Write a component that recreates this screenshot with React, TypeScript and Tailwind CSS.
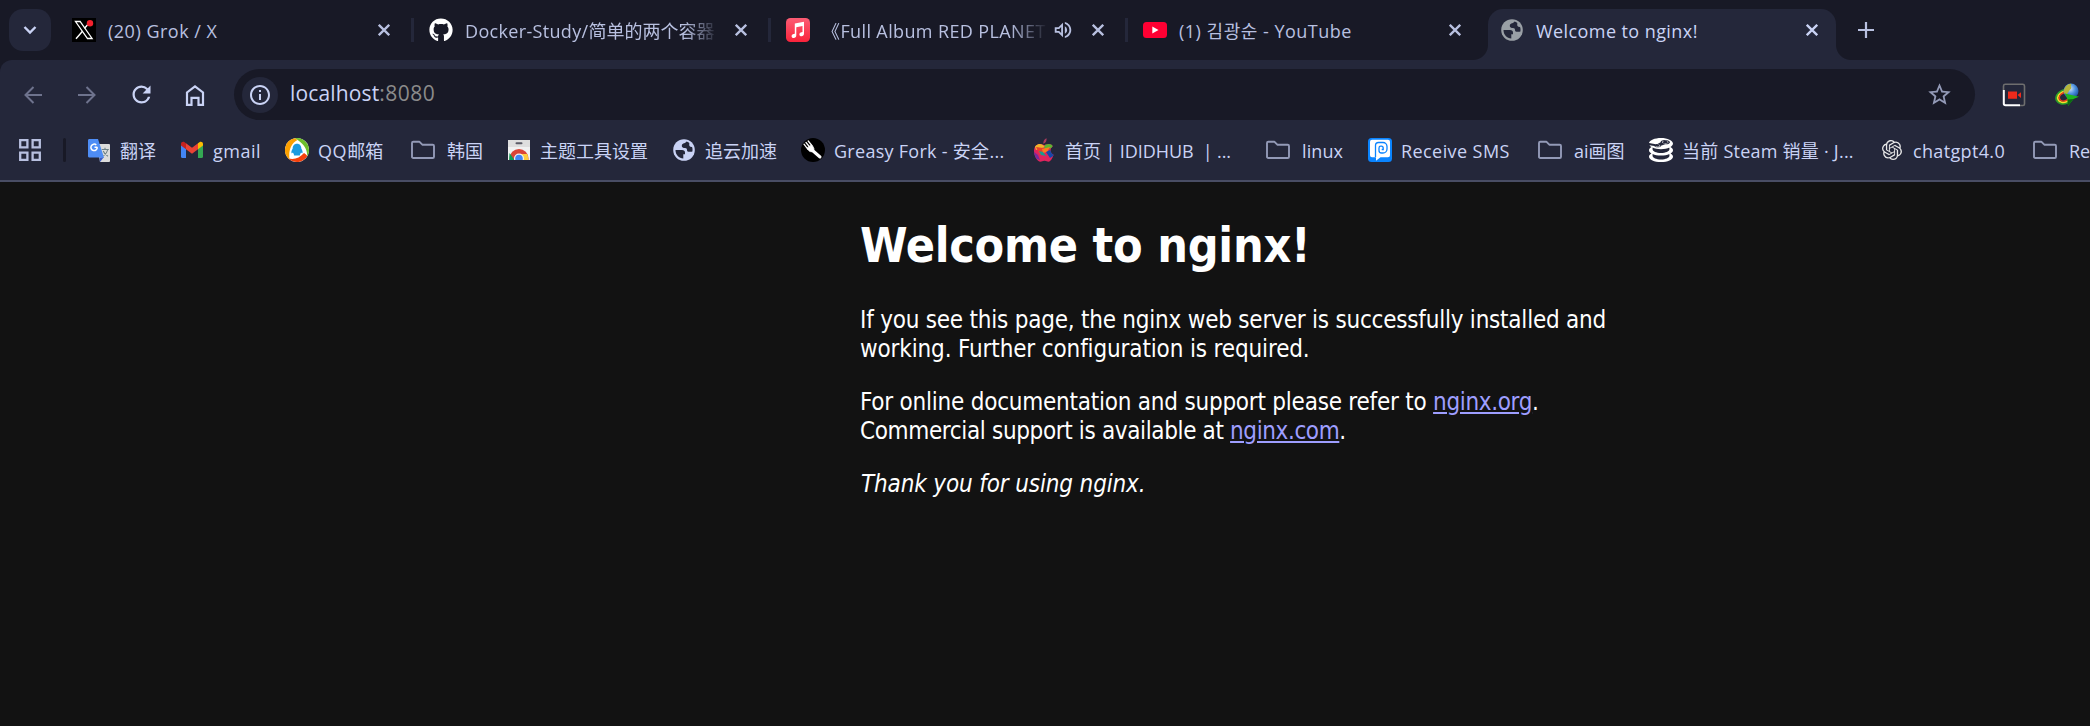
import React from 'react'
import { FaGithub } from 'react-icons/fa6'
import { MdRefresh, MdStarOutline, MdInfoOutline, MdOutlineVolumeUp } from 'react-icons/md'
import { SiOpenai, SiSteamdb } from 'react-icons/si'

const UI = "font-['Open_Sans','Noto_Sans_CJK_SC','Noto_Sans_CJK_KR',sans-serif]"

function XIcon() {
  return (
    <svg viewBox="0 0 24 24" className="size-6">
      <rect width="24" height="24" fill="#000" />
      <path d="M3.5 3.5h4.6l12 17h-4.6z" fill="none" stroke="#fff" strokeWidth="1.3" />
      <path d="M18.5 3.5l-6 6.7M10.5 13.2L4 20.8" stroke="#fff" strokeWidth="1.4" />
      <circle cx="18" cy="5.3" r="3.2" fill="#f4212e" />
    </svg>
  )
}

function MusicIcon() {
  return (
    <svg viewBox="0 0 24 24" className="size-6">
      <defs>
        <linearGradient id="music" x1="0" y1="0" x2="0" y2="1">
          <stop offset="0" stopColor="#fb5c74" />
          <stop offset="1" stopColor="#fa233b" />
        </linearGradient>
      </defs>
      <rect width="24" height="24" rx="4.500" fill="url(#music)" />
      <path d="M8.8 5.6L18 3.8v11.7c0 1.7-1 2.7-2.5 2.7-1.3 0-2.1-.8-2.1-1.8 0-1.2.9-1.9 2-2.1l1.1-.2V8l-6.2 1.3v8c0 1.7-1.1 2.7-2.6 2.7-1.3 0-2.1-.8-2.1-1.8 0-1.2.9-1.9 2-2.1l1.2-.3z" fill="#fff" />
    </svg>
  )
}

function YouTubeIcon() {
  return (
    <svg viewBox="0 0 24 24" className="size-6">
      <rect y="4" width="24" height="16" rx="3.5" fill="#ff0033" />
      <path d="M9.3 8.6l6.200 3.400-6.200 3.400z" fill="#fff" />
    </svg>
  )
}

function GlobeIcon({ color, cut }: { color: string; cut: string }) {
  return (
    <svg viewBox="0 0 24 24" className="size-6 shrink-0">
      <circle cx="12" cy="12" r="10.800" fill={color} />
      <path d="M3.500 12H10c2 0 3 1 3 2.800v1.400h-1.700v4.200C7 20.400 3.500 17 3.500 12z" fill={cut} />
      <path d="M14.500 3.600c-.6 1.900-4.200 1.400-4.700 3.900-.3 2 1.700 2.500 3.200 2.500s2 .8 2 2c0 1.500 1 1.800 2.500 1.800 1 0 2 .2 2.900-.4.300-1.500.2-3.200-.4-4.700-1 .5-2.400 0-2.700-1.200-.2-1 .3-1.900-.2-2.700-.8-.6-1.700-1-2.600-1.200z" fill={cut} />
    </svg>
  )
}

function Close() {
  return (
    <svg viewBox="0 0 12 12" className="size-3 shrink-0" fill="none" stroke="currentColor" strokeWidth="2.300">
      <path d="M.8.8l10.400 10.400M11.200.8L.8 11.200" />
    </svg>
  )
}

function Folder() {
  return (
    <svg viewBox="0 0 24 24" className="size-6 shrink-0" fill="none" stroke="#939ab7" strokeWidth="1.900" strokeLinejoin="round">
      <path d="M1 5c0-.8.500-1.300 1.300-1.300h6l3 3h10.400c.8 0 1.300.5 1.300 1.300v10.700c0 .8-.5 1.300-1.300 1.300H2.300c-.8 0-1.300-.5-1.300-1.300z" />
    </svg>
  )
}

function TranslateIcon() {
  return (
    <svg viewBox="0 0 24 24" className="size-6">
      <path d="M10 6h12a1 1 0 011 1v16a1 1 0 01-1 1H13z" fill="#dcdcdc" />
      <path d="M12.500 19.500L17 19l-4 5z" fill="#3a5bc7" />
      <path d="M2 1h9l6 18.500H2A1.200 1.200 0 011 18.300V2.200A1.200 1.200 0 012 1z" fill="#4e8df5" />
      <path d="M10.300 9.300H7.500M10.300 9.300a3.200 3.200 0 11-1-2.300" fill="none" stroke="#fff" strokeWidth="1.500" />
      <path d="M14.800 11.500h7M18 9.800v1.700M20.800 11.500c-.6 3-2.500 5-4.300 6.300M16.200 13c.8 2 2.500 4 4.800 5.300" fill="none" stroke="#6f8388" strokeWidth="1.100" />
    </svg>
  )
}

function GmailIcon() {
  return (
    <svg viewBox="0 0 24 24" className="size-6">
      <path d="M1 6.500l5 3.800V20H2.500A1.500 1.500 0 011 18.500z" fill="#4285f4" />
      <path d="M18 10.300l5-3.800v12a1.500 1.500 0 01-1.500 1.500H18z" fill="#34a853" />
      <path d="M18 5.200l1.400-.9C21 3.200 23 4.200 23 6v1.500l-5 3.800z" fill="#fbbc04" />
      <path d="M6 5.200l6 4.500 6-4.500v6.100l-6 4.500-6-4.500z" fill="#ea4335" />
      <path d="M1 6c0-1.800 2-2.800 3.600-1.700L6 5.200v6.100L1 7.500z" fill="#c5221f" />
    </svg>
  )
}

function QQMailIcon() {
  return (
    <svg viewBox="0 0 24 24" className="size-6">
      <circle cx="12" cy="12" r="12" fill="#fff" />
      <path d="M9.500.3A12 12 0 0124 12c0 2.500-.7 4.500-1.800 6.200C22.500 11 18 4.500 9.500.3z" fill="#6cbe2c" />
      <path d="M22.200 18.200A12 12 0 013.500 20.500c6 1.500 11-.5 15.500-5.500 1.500 1 2.800 2 3.200 3.200z" fill="#f5410c" />
      <path d="M4.500 21.400A12 12 0 019.500.3c1 .4 2 1 3 1.800C5.500 6 3.500 13 4.500 21.400z" fill="#fca000" />
      <path d="M12 5.800c-3 0-4.300 2.200-4.300 4.800-1 1.500-1.600 3.300-1.200 4.600.5.300 1-.2 1.400-.7.300.8.700 1.300 1.200 1.800-.7.500-.5 1.200.4 1.200h5c.9 0 1.100-.7.400-1.200.5-.5.900-1 1.200-1.800.4.500.9 1 1.400.7.400-1.300-.2-3.100-1.200-4.600 0-2.600-1.300-4.800-4.300-4.800z" fill="#1d9be0" />
    </svg>
  )
}

function WebStoreIcon() {
  return (
    <svg viewBox="0 0 24 24" className="size-6">
      <defs>
        <clipPath id="store">
          <path d="M1 2h22v20H1z" />
        </clipPath>
      </defs>
      <path d="M1 2h22v20H1z" fill="#f1f1f1" />
      <path d="M1 2h22v7H1z" fill="#dedede" />
      <rect x="8.500" y="4.300" width="7" height="2" rx="1" fill="#5a5a66" />
      <g clipPath="url(#store)">
        <circle cx="12" cy="20.500" r="9.500" fill="#db4437" />
        <path d="M2.500 15L9 24H2z" fill="#0f9d58" />
        <path d="M12 16h8.500l1.500 8H12z" fill="#ffcd40" />
        <circle cx="12" cy="20.500" r="5" fill="#f1f1f1" />
        <circle cx="12" cy="20.500" r="3.800" fill="#4285f4" />
      </g>
    </svg>
  )
}

function GreasyForkIcon() {
  return (
    <svg viewBox="0 0 24 24" className="size-6" fill="none" stroke="#fff" strokeLinecap="round">
      <circle cx="12" cy="12" r="12" fill="#000" stroke="none" />
      <path d="M3 6.200l4 5.200M5 4.500l4 5M7.200 3l4 5" strokeWidth="1.300" />
      <path d="M6.500 9.800c.5 3.500 3 4.500 5.500 3.700 1.500-2 1.300-4-1.300-6.300z" fill="#fff" strokeWidth=".8" />
      <path d="M11 12l8 7" strokeWidth="3" />
    </svg>
  )
}

function AppleIcon() {
  return (
    <svg viewBox="0 0 24 24" className="size-6">
      <defs>
        <clipPath id="apple">
          <path d="M12.300 7c1.500 0 2.300-1 4.500-1 1.600 0 3.200.9 4 2.200-3.300 2-2.800 7 .8 8.600-1 3.200-2.900 6.900-5.100 6.900-1.500 0-2-1-4-1s-2.500 1-4 1C5.500 23.700 2 18 2 13c0-4.500 2.800-7 6-7 2 0 2.900 1 4.300 1z" />
        </clipPath>
      </defs>
      <path d="M11.300 5.800c-.2-2.700 1-5 3.300-5.600.2 2.600-.8 4.800-3.300 5.600z" fill="#a83a5c" />
      <g clipPath="url(#apple)">
        <path d="M0 0h24v24H0z" fill="#e0245e" />
        <path d="M2 6h8l3 3-9 3z" fill="#f0b429" />
        <path d="M13 6h9l-2 4-8 1.500z" fill="#5cb531" />
        <path d="M4 9l7 1 2 4-5 3z" fill="#e9402c" />
        <path d="M10 11l8-2-3 5-4 1z" fill="#fb7c1d" />
        <path d="M14 14l4-2 5 5-5 3z" fill="#1748a8" />
        <path d="M7 13l4 1 3 4-5-1z" fill="#1a9b8f" />
        <path d="M2 14l4 3 2 5-6-2z" fill="#7a2a9b" />
      </g>
    </svg>
  )
}

function ReceiveSmsIcon() {
  return (
    <svg viewBox="0 0 24 24" className="size-6">
      <rect width="24" height="24" rx="3.500" fill="#0a84ff" />
      <path d="M4 1.800h16a2 2 0 012 2v13.400a2 2 0 01-2 2h-7.500L8 22.800v-3.600H4a2 2 0 01-2-2V3.800a2 2 0 012-2z" fill="#fff" />
      <path d="M7.500 19V7.500a3 3 0 013-3H15a4 4 0 014 4V11a4 4 0 01-4 4h-1.500a2.500 2.500 0 01-2.500-2.500V10a1.800 1.800 0 011.800-1.800h.7A1.700 1.700 0 0115.200 10v1.500h-1.500" fill="none" stroke="#0a84ff" strokeWidth="1.300" />
    </svg>
  )
}

function RecorderIcon() {
  return (
    <svg viewBox="0 0 24 24" className="size-6" fill="none">
      <path d="M1.500 7V3A1.800 1.800 0 013.300 1.300h17.400A1.800 1.800 0 0122.500 3v18a1.500 1.500 0 01-1.500 1.500h-3" stroke="#6e6e6e" strokeWidth="1.600" />
      <path d="M1.800 7v13.500a1.700 1.700 0 001.700 1.700H18" stroke="#fff" strokeWidth="2" />
      <path d="M6 8.500h9v7.300H6zM15.500 12l3.500-2.800v5.800z" fill="#ee2a1b" />
    </svg>
  )
}

function DownloadManagerIcon() {
  return (
    <svg viewBox="0 0 24 24" className="size-6" fill="none">
      <defs>
        <radialGradient id="globe" cx=".45" cy=".35" r=".65">
          <stop offset="0" stopColor="#cfe2f5" />
          <stop offset=".5" stopColor="#4f93e0" />
          <stop offset="1" stopColor="#1b4f9e" />
        </radialGradient>
      </defs>
      <g transform="rotate(-25 9 14)">
        <ellipse cx="9.500" cy="14" rx="8.700" ry="6.700" stroke="#2aa02a" strokeWidth="1.800" />
        <ellipse cx="9.700" cy="14" rx="7.200" ry="5.300" stroke="#f5e12a" strokeWidth="1.700" />
        <ellipse cx="9.900" cy="14" rx="5.700" ry="4" stroke="#f0401a" strokeWidth="1.500" />
      </g>
      <circle cx="16" cy="8" r="7.500" fill="url(#globe)" />
      <path d="M9 7c1-4 4-6 7-6.300 1 1.300-1 2.300 0 3.300s-1 3-2 4-1 3-3 3-2.500-2-2-4z" fill="#b5b53a" />
      <path d="M10 10.500l14 3.300-5.500 2.200-5.500 7-.5-6.500z" fill="#1fb51f" />
      <path d="M12.500 16.500l6-.5-5.500 7z" fill="#0b6a12" />
    </svg>
  )
}

function Tab({ icon, children, w, last, audio }: { icon: React.ReactNode; children: React.ReactNode; w: string; last?: boolean; audio?: boolean }) {
  return (
    <div className="flex h-[60px] w-[357px] shrink-0 items-center pl-[15px] text-[#b8c0e0]">
      {icon}
      <div className={`ml-3 overflow-hidden pt-[2px] whitespace-pre ${w}`}>{children}</div>
      <div className="ml-auto flex items-center">
        {audio && <MdOutlineVolumeUp className="mr-[18px] size-[22px]" />}
        <Close />
        <span className={`ml-[21px] h-6 w-[3px] ${last ? '' : 'bg-[#24273a]'}`} />
      </div>
    </div>
  )
}

function Bookmark({ icon, w, gap = 'pl-[9px]', children }: { icon: React.ReactNode; w: string; gap?: string; children: React.ReactNode }) {
  return (
    <div className={`flex shrink-0 items-center ${w}`}>
      {icon}
      <div className={`pt-[2px] whitespace-pre ${gap}`}>{children}</div>
    </div>
  )
}

export default function App() {
  return (
    <div className={`flex h-[726px] w-[2090px] flex-col overflow-hidden bg-[#121212] text-[18px] ${UI}`}>
      <header className="bg-[#181926]">
        <div className="flex h-[60px] items-center">
          <button className="ml-[9px] flex size-[42px] items-center justify-center rounded-[14px] bg-[#24273a]">
            <svg viewBox="0 0 14 10" className="h-[10px] w-[14px]" fill="none" stroke="#cad3f5" strokeWidth="2.400">
              <path d="M1.500 2L7 7.500 12.500 2" />
            </svg>
          </button>
          <div className="ml-[6px] flex">
            <Tab icon={<XIcon />} w="w-[260px]"><span className="tracking-[0.5px]">(20) Grok / X</span></Tab>
            <Tab icon={<FaGithub className="size-6 shrink-0 text-white" />} w="w-[250px] [mask-image:linear-gradient(to_right,#000_220px,transparent_254px)]"><span className="tracking-[0.33px]">Docker-Study/</span>简单的两个容器</Tab>
            <Tab icon={<MusicIcon />} audio w="w-[224px] [mask-image:linear-gradient(to_right,#000_188px,transparent_226px)]"><span className="tracking-[0.38px]">《Full Album RED PLANET</span></Tab>
            <Tab icon={<YouTubeIcon />} last w="w-[260px]"><span className="tracking-[0.5px]">(1) 김광순 - YouTube</span></Tab>
          </div>
          <div className="relative ml-[3px] flex h-[51px] w-[348px] items-center self-end rounded-t-[15px] bg-[#24273a] pr-[18px] pb-[9px] pl-3 text-[#cad3f5]">
            <span className="absolute bottom-0 -left-[15px] size-[15px] [background:radial-gradient(circle_at_0_0,#181926_14.5px,#24273a_15.5px)]" />
            <span className="absolute -right-[15px] bottom-0 size-[15px] [background:radial-gradient(circle_at_100%_0,#181926_14.5px,#24273a_15.5px)]" />
            <GlobeIcon color="#9aa0a6" cut="#24273a" />
            <div className="ml-3 pt-[2px] tracking-[0.42px]">Welcome to nginx!</div>
            <span className="ml-auto flex"><Close /></span>
          </div>
          <svg viewBox="0 0 16 16" className="ml-[22px] size-4" stroke="#b8c0e0" strokeWidth="2.200">
            <path d="M8 0v16M0 8h16" />
          </svg>
        </div>

        <div className="flex h-[60px] items-end rounded-tl-[12px] bg-[#24273a]">
          <nav className="flex h-[51px] w-[234px] items-center pl-[6px] text-[#cad3f5]">
            <span className="flex w-[54px] justify-center text-[#6e738d]">
              <svg viewBox="0 0 18 18" className="size-[18px]" fill="none" stroke="currentColor" strokeWidth="2"><path d="M18 9H1.500M9.500 1L1.500 9l8 8" /></svg>
            </span>
            <span className="flex w-[54px] justify-center text-[#6e738d]">
              <svg viewBox="0 0 18 18" className="size-[18px]" fill="none" stroke="currentColor" strokeWidth="2"><path d="M0 9h16.500M8.500 1l8 8-8 8" /></svg>
            </span>
            <span className="flex w-[54px] justify-center"><MdRefresh className="size-[27px]" /></span>
            <span className="flex w-[54px] justify-center">
              <svg viewBox="0 0 20 22" className="h-[22px] w-5" fill="none" stroke="currentColor" strokeWidth="2.200"><path d="M2 20.800V8.500L10 2.300l8 6.200v12.300h-4.500v-7h-7v7z" /></svg>
            </span>
          </nav>
          <div className="flex h-[51px] w-[1741px] items-center rounded-full bg-[#181926] pr-[22px] pl-2 text-[21px] text-[#cad3f5]">
            <span className="flex size-9 items-center justify-center rounded-full bg-[#24273a]"><MdInfoOutline className="size-6" /></span>
            <div className="ml-3 pb-[2px] tracking-[0.15px]">localhost<span className="tracking-[0.5px] text-[#8b8b8b]">:8080</span></div>
            <MdStarOutline className="ml-auto size-[27px] text-[#939ab7]" />
          </div>
          <div className="flex h-[51px] items-center gap-[29px] pl-[27px]">
            <RecorderIcon />
            <DownloadManagerIcon />
          </div>
        </div>

        <div className="flex h-[62px] items-center overflow-hidden border-b-2 border-[#494d64] bg-[#24273a] pl-[18px] text-[#cad3f5]">
          <svg viewBox="0 0 24 24" className="size-6 shrink-0" fill="none" stroke="#b8c0e0" strokeWidth="2.300">
            <path d="M2.200 2.200h7.200v7.200H2.200zM14.600 2.200h7.200v7.200h-7.200zM2.200 14.600h7.200v7.200H2.200zM14.600 14.600h7.200v7.200h-7.200z" />
          </svg>
          <span className="mr-[21px] ml-[21px] h-6 w-[3px] shrink-0 rounded-full bg-[#181926]" />
          <Bookmark icon={<TranslateIcon />} w="w-[93px]">翻译</Bookmark>
          <Bookmark icon={<GmailIcon />} w="w-[105px]"><span className="tracking-[0.5px]">gmail</span></Bookmark>
          <Bookmark icon={<QQMailIcon />} w="w-[126px]"><span className="tracking-[0.6px]">QQ</span>邮箱</Bookmark>
          <Bookmark icon={<Folder />} w="w-[96px]" gap="pl-3">韩国</Bookmark>
          <Bookmark icon={<WebStoreIcon />} w="w-[165px]">主题工具设置</Bookmark>
          <Bookmark icon={<GlobeIcon color="#cad3f5" cut="#24273a" />} w="w-[129px]">追云加速</Bookmark>
          <Bookmark icon={<GreasyForkIcon />} w="w-[231px]"><span className="tracking-[0.28px]">Greasy Fork - 安全...</span></Bookmark>
          <Bookmark icon={<AppleIcon />} w="w-[234px]"><span className="tracking-[-0.08px]">首页 | IDIDHUB  | ...</span></Bookmark>
          <Bookmark icon={<Folder />} w="w-[102px]" gap="pl-3"><span className="tracking-[0.1px]">linux</span></Bookmark>
          <Bookmark icon={<ReceiveSmsIcon />} w="w-[170px]"><span className="tracking-[0.42px]">Receive SMS</span></Bookmark>
          <Bookmark icon={<Folder />} w="w-[111px]" gap="pl-3">ai画图</Bookmark>
          <Bookmark icon={<SiSteamdb className="size-6 shrink-0 text-white" />} w="w-[231px]"><span className="tracking-[0.24px]">当前 Steam 销量 · J...</span></Bookmark>
          <Bookmark icon={<SiOpenai className="mx-[2px] size-5 text-[#e8e8e8]" />} w="w-[153px]"><span className="tracking-[0.35px]">chatgpt4.0</span></Bookmark>
          <Bookmark icon={<Folder />} w="w-[80px]" gap="pl-3">Re</Bookmark>
        </div>
      </header>

      <main className="ml-[860px] w-[840px] font-['DejaVu_Sans_Condensed','DejaVu_Sans',sans-serif] text-[24px] leading-[29px] whitespace-nowrap text-white [font-stretch:condensed]">
        <h1 className="mt-[34px] text-[48px] leading-[58px] font-bold tracking-[-0.25px]">Welcome to nginx!</h1>
        <p className="mt-8">
          <span className="tracking-[-0.225px]">If you see this page, the nginx web server is successfully installed and</span><br />
          <span className="tracking-[-0.14px]">working. Further configuration is required.</span>
        </p>
        <p className="mt-6">
          <span className="tracking-[-0.23px]">For online documentation and support please refer to </span><a className="tracking-[-0.34px] text-[#9e9eff] underline">nginx.org</a>.<br />
          <span className="tracking-[-0.36px]">Commercial support is available at </span><a className="tracking-[-0.4px] text-[#9e9eff] underline">nginx.com</a>.
        </p>
        <p className="mt-6 pl-px"><em className="tracking-[-0.14px]">Thank you for using nginx.</em></p>
      </main>
    </div>
  )
}
